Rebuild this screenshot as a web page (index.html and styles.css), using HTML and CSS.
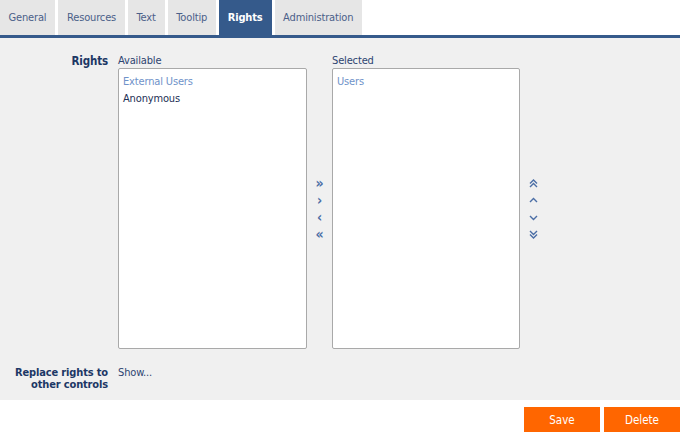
FILE: index.html
```
<!DOCTYPE html>
<html>
<head>
<meta charset="utf-8">
<link rel="stylesheet" href="styles.css">
</head>
<body>
<div class="tabs">
  <div class="tab">General</div>
  <div class="tab">Resources</div>
  <div class="tab">Text</div>
  <div class="tab">Tooltip</div>
  <div class="tab active">Rights</div>
  <div class="tab">Administration</div>
</div>
<div class="content">
  <div class="row rights-row">
    <div class="label">Rights</div>
    <div class="picker">
      <div class="col">
        <div class="cap">Available</div>
        <div class="listbox">
          <div class="item muted">External Users</div>
          <div class="item">Anonymous</div>
        </div>
      </div>
      <div class="arrows">
        <span class="arr">&raquo;</span>
        <span class="arr">&rsaquo;</span>
        <span class="arr">&lsaquo;</span>
        <span class="arr">&laquo;</span>
      </div>
      <div class="col col2">
        <div class="cap">Selected</div>
        <div class="listbox">
          <div class="item muted">Users</div>
        </div>
      </div>
      <div class="arrows arrows-r">
        <svg width="9" height="9" viewBox="0 0 9 9"><path d="M1 4.5L4.5 1L8 4.5M1 8L4.5 4.5L8 8" fill="none" stroke="#4b6ea6" stroke-width="1.4"/></svg>
        <svg width="9" height="9" viewBox="0 0 9 9"><path d="M1 6L4.5 2.5L8 6" fill="none" stroke="#4b6ea6" stroke-width="1.4"/></svg>
        <svg width="9" height="9" viewBox="0 0 9 9"><path d="M1 3L4.5 6.5L8 3" fill="none" stroke="#4b6ea6" stroke-width="1.4"/></svg>
        <svg width="9" height="9" viewBox="0 0 9 9"><path d="M1 1L4.5 4.5L8 1M1 4.5L4.5 8L8 4.5" fill="none" stroke="#4b6ea6" stroke-width="1.4"/></svg>
      </div>
    </div>
  </div>
  <div class="row replace-row">
    <div class="label"><div>Replace rights to</div><div>other controls</div></div>
    <div class="show">Show...</div>
  </div>
</div>
<div class="footer">
  <button class="btn">Save</button>
  <button class="btn">Delete</button>
</div>
</body>
</html>
```
FILE: styles.css
```
html, body {
  margin: 0;
  padding: 0;
  background: #ffffff;
  font-family: "DejaVu Sans Condensed", "DejaVu Sans", "Liberation Sans", sans-serif;
  font-size: 11px;
  letter-spacing: -0.15px;
  color: #1f3560;
}
.tabs {
  display: flex;
  gap: 3px;
  height: 35px;
  border-bottom: 3px solid #355a8b;
}
.tab {
  background: #e6e6e6;
  color: #4b6089;
  line-height: 35px;
  padding: 0 9px 0 8.5px;
}
.tab.active {
  background: #355a8b;
  color: #ffffff;
  font-weight: bold;
}
.content {
  background: #f0f0f0;
  height: 362px;
  box-sizing: border-box;
  padding-top: 16px;
}
.row {
  display: flex;
}
.label {
  width: 108px;
  padding-right: 10px;
  text-align: right;
  font-weight: bold;
  font-size: 11.5px;
  color: #1c3765;
}
.rights-row .label {
  line-height: 14px;
}
.picker {
  display: flex;
}
.col {
  display: flex;
  flex-direction: column;
  width: 189px;
}
.col2 {
  width: 188px;
}
.cap {
  line-height: 14px;
  color: #2d4470;
}
.listbox {
  height: 281px;
  box-sizing: border-box;
  background: #ffffff;
  border: 1px solid #a9a9a9;
  border-radius: 2px;
  padding: 4px 4px;
}
.item {
  line-height: 17px;
  color: #1d2f55;
}
.item.muted {
  color: #6f92c9;
}
.arrows {
  width: 25px;
  margin-top: 14px;
  display: flex;
  flex-direction: column;
  align-items: center;
  justify-content: center;
  gap: 2px;
}
.arr {
  color: #4b6ea6;
  font-size: 14px;
  line-height: 15px;
  font-weight: bold;
}
.arrows-r {
  width: 26px;
  gap: 8px;
}
.replace-row {
  margin-top: 18px;
}
.replace-row .label {
  line-height: 12px;
  font-size: 11px;
}
.show {
  color: #2d4470;
  line-height: 12px;
}
.footer {
  display: flex;
  justify-content: flex-end;
  gap: 4px;
  padding-top: 7px;
}
.btn {
  width: 76px;
  height: 25px;
  border: 0;
  background: #ff6600;
  color: #ffffff;
  font-family: "DejaVu Sans Condensed", "DejaVu Sans", "Liberation Sans", sans-serif;
  font-size: 11.5px;
  padding: 0;
}
```
